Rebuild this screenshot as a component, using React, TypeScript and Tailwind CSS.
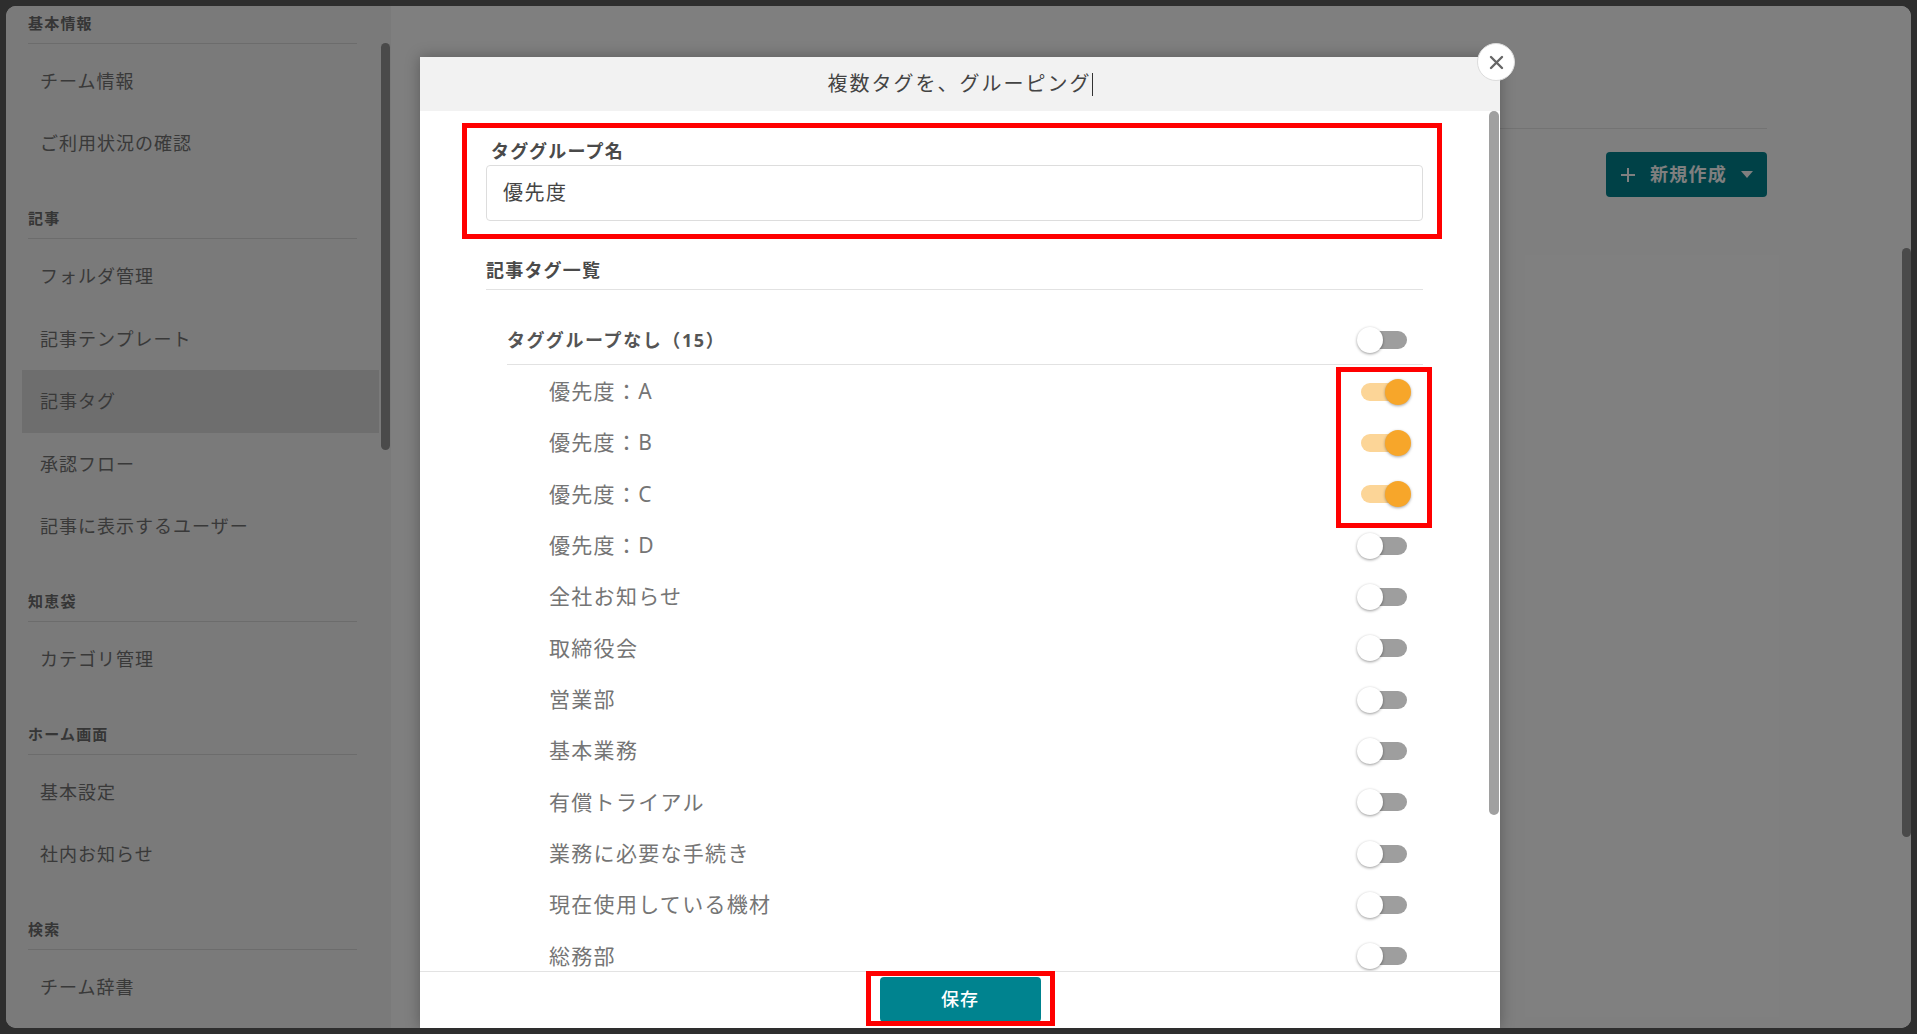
import React from 'react';

const SECTIONS = [
  { title: '基本情報', items: ['チーム情報', 'ご利用状況の確認'] },
  { title: '記事', items: ['フォルダ管理', '記事テンプレート', '記事タグ', '承認フロー', '記事に表示するユーザー'] },
  { title: '知恵袋', items: ['カテゴリ管理'] },
  { title: 'ホーム画面', items: ['基本設定', '社内お知らせ'] },
  { title: '検索', items: ['チーム辞書'] },
];

const TAGS = [
  { name: '優先度：A', on: true },
  { name: '優先度：B', on: true },
  { name: '優先度：C', on: true },
  { name: '優先度：D', on: false },
  { name: '全社お知らせ', on: false },
  { name: '取締役会', on: false },
  { name: '営業部', on: false },
  { name: '基本業務', on: false },
  { name: '有償トライアル', on: false },
  { name: '業務に必要な手続き', on: false },
  { name: '現在使用している機材', on: false },
  { name: '総務部', on: false },
];

const Toggle = ({ on }: { on: boolean }) => (
  <div className="relative h-[26px] w-[54px] shrink-0">
    {on ? (
      <>
        <div className="absolute left-[4px] top-[4px] h-[18px] w-[46px] rounded-full bg-[#fcd597]" />
        <div className="absolute left-[28px] top-0 h-[26px] w-[26px] rounded-full bg-[#f7a62a] shadow-[0_1px_3px_rgba(0,0,0,0.35)]" />
      </>
    ) : (
      <>
        <div className="absolute left-[4px] top-[4px] h-[18px] w-[46px] rounded-full bg-[#9e9e9e]" />
        <div className="absolute left-0 top-0 h-[26px] w-[26px] rounded-full bg-white shadow-[0_1px_3px_rgba(0,0,0,0.4)]" />
      </>
    )}
  </div>
);

const Sidebar = () => (
  <aside className="relative h-full w-[385px] shrink-0 overflow-hidden bg-[#f4f4f4] pl-[16px] pt-[7px]">
    <div className="w-[357px]">
      {SECTIONS.map((s, i) => (
        <div key={s.title} className={i === 0 ? '' : 'mt-[33px]'}>
          <div className="mx-[6px] mr-[22px] border-b border-[#d8d8d8] pb-[10px] text-[15px] font-bold leading-[20px] tracking-[1.2px] text-[#6c6c6c]">
            {s.title}
          </div>
          <div className="mt-[6px]">
            {s.items.map((it) => (
              <div
                key={it}
                className={
                  it === '記事タグ'
                    ? 'flex h-[62.6px] items-center bg-[#dcdcdc] pl-[18px] text-[18px] tracking-[1px] text-[#737373]'
                    : 'flex h-[62.6px] items-center pl-[18px] text-[18px] tracking-[1px] text-[#737373]'
                }
              >
                {it}
              </div>
            ))}
          </div>
        </div>
      ))}
    </div>
    <div className="absolute left-[375px] top-[37px] h-[407px] w-[9px] rounded-full bg-[#949494]" />
  </aside>
);

const Main = () => (
  <main className="relative h-full flex-1 bg-white">
    <div className="ml-[40px] mr-[144px] h-[123px] border-b border-[#e6e6e6]" />
    <div className="mr-[144px] mt-[23px] flex justify-end">
      <button className="flex h-[45px] w-[161px] items-center justify-center gap-[14px] rounded-[4px] bg-[#00838f] text-[18px] font-bold tracking-[1.2px] text-white">
        <svg width="16" height="16" viewBox="0 0 16 16" fill="none" stroke="currentColor" strokeWidth="2">
          <path d="M8 1v14M1 8h14" />
        </svg>
        <span>新規作成</span>
        <svg width="12" height="8" viewBox="0 0 12 8" fill="currentColor">
          <path d="M0 0h12L6 7z" />
        </svg>
      </button>
    </div>
    <div className="absolute right-0 top-[242px] h-[589px] w-[9px] rounded-full bg-[#949494]" />
  </main>
);

const Modal = () => (
  <div className="absolute bottom-0 left-[414px] top-[51px] flex w-[1080px] flex-col bg-white shadow-[0_0_14px_rgba(0,0,0,0.3)]">
    <div className="flex h-[54px] shrink-0 items-center justify-center bg-[#f2f2f2] text-[20px] tracking-[2px] text-[#444]">
      <span>複数タグを、グルーピング</span>
      <span className="inline-block h-[23px] w-[1px] bg-[#333]" />
    </div>

    <div className="relative flex-1 overflow-hidden">
      <div className="ml-[66px] w-[937px] pt-[12px]">
        <div className="relative pb-[18px] pt-[18px]">
          <div className="pl-[5px] text-[18px] font-bold leading-[20px] tracking-[1.2px] text-[#4a4a4a]">タググループ名</div>
          <div className="mt-[4px] flex h-[56px] items-center rounded-[4px] border border-[#dddddd] pl-[16px] text-[20px] tracking-[1.5px] text-[#444]">
            優先度
          </div>
          <div className="absolute -left-[24px] -right-[19px] bottom-0 top-0 border-[5px] border-[#ff0000]" />
        </div>

        <div className="mt-[21px] border-b border-[#e2e2e2] pb-[9px] text-[18px] font-bold leading-[20px] tracking-[1.2px] text-[#4a4a4a]">
          記事タグ一覧
        </div>

        <div className="ml-[21px] mt-[26px]">
          <div className="flex h-[49px] items-center justify-between border-b border-[#e2e2e2] pr-[12px]">
            <span className="text-[18px] font-bold tracking-[1.6px] text-[#555]">タググループなし（15）</span>
            <Toggle on={false} />
          </div>
          <div className="relative pt-[1px]">
            {TAGS.map((t) => (
              <div key={t.name} className="flex h-[51.33px] items-center justify-between pl-[42px] pr-[12px]">
                <span className="text-[21px] tracking-[1.3px] text-[#757575]">{t.name}</span>
                <Toggle on={t.on} />
              </div>
            ))}
            <div className="absolute -right-[9px] top-[2px] h-[161px] w-[96px] border-[5px] border-[#ff0000]" />
          </div>
        </div>
      </div>
      <div className="absolute right-[1px] top-0 h-[704px] w-[10px] rounded-full bg-[#a0a0a0]" />
    </div>

    <div className="flex h-[57px] shrink-0 justify-center border-t border-[#e3e3e3] pt-[5px]">
      <div className="relative">
        <button className="h-[45px] w-[161px] rounded-[4px] bg-[#00838f] text-[18px] font-medium tracking-[1px] text-white">保存</button>
        <div className="absolute -left-[14px] -top-[6px] h-[55px] w-[189px] border-[5px] border-[#ff0000]" />
      </div>
    </div>

    <button className="absolute -right-[15px] -top-[14px] flex h-[38px] w-[38px] items-center justify-center rounded-full border border-[#dcdcdc] bg-white text-[#666]">
      <svg width="15" height="15" viewBox="0 0 15 15" stroke="currentColor" strokeWidth="2.4" strokeLinecap="round">
        <path d="M2 2l11 11M13 2L2 13" />
      </svg>
    </button>
  </div>
);

export default function App() {
  return (
    <div className="h-[1034px] w-[1917px] bg-[#2e2e2e] p-[6px] font-['Noto_Sans','Noto_Sans_CJK_JP',sans-serif]">
      <div className="relative flex h-full w-full overflow-hidden rounded-[10px]">
        <Sidebar />
        <Main />
        <div className="absolute inset-0 bg-black/50" />
        <Modal />
      </div>
    </div>
  );
}
